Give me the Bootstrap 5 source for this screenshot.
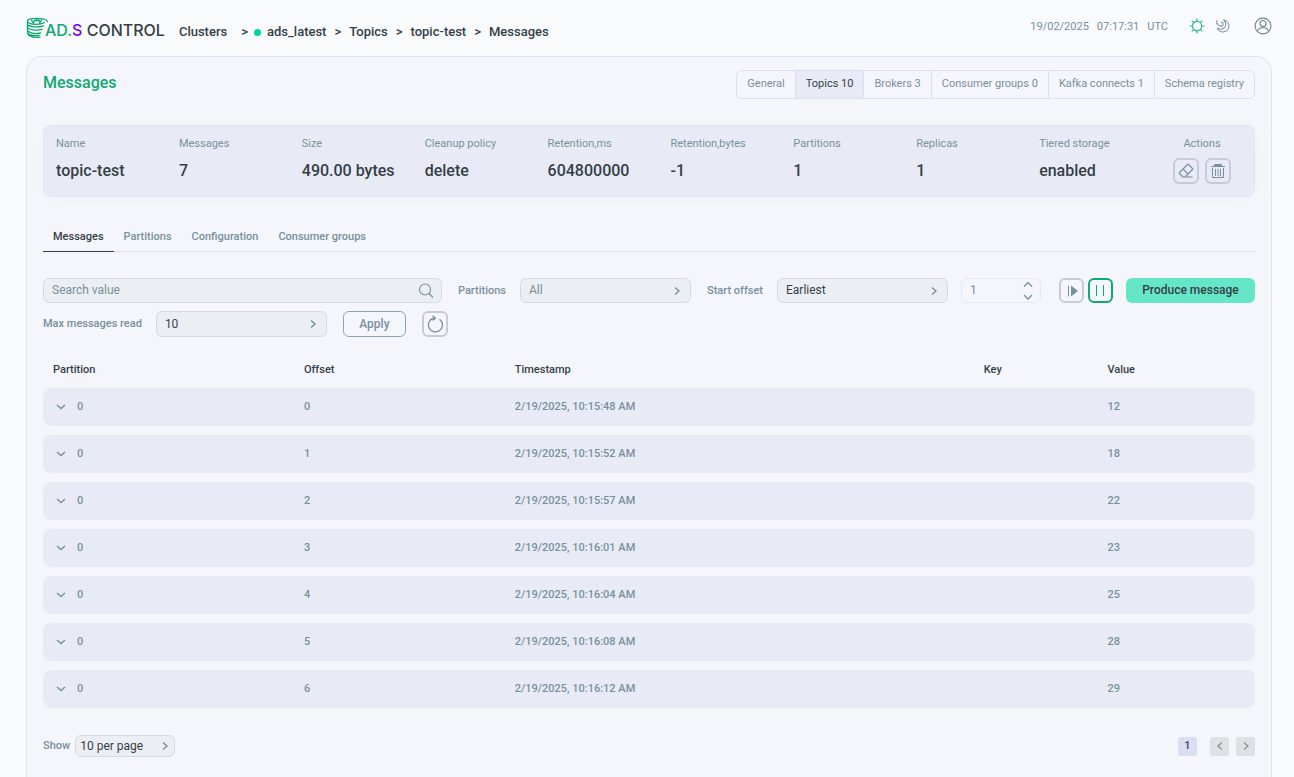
<!DOCTYPE html>
<html lang="en">
<head>
<meta charset="utf-8">
<meta name="viewport" content="width=device-width, initial-scale=1">
<title>Messages - ADS Control</title>
<link href="https://cdn.jsdelivr.net/npm/bootstrap@5.3.0/dist/css/bootstrap.min.css" rel="stylesheet">
<style>
:root{--ink:#353f47;--muted:#78909c;--line:#d9dff2;--panel:#e8ebf5;--green:#0fa972;--field:#ebeff4;--field-line:#d6dade}
body{font-family:Roboto,"Liberation Sans",sans-serif;font-size:11px;line-height:16px;color:var(--muted);background:#f8fafc}
svg{display:block;flex:none}
a{text-decoration:none;color:inherit}
.topbar{height:56px;padding:0 22px 0 26px}
.brand-text{font:500 16px/20px Inter,sans-serif;color:var(--ink);white-space:pre;margin-left:-4px}
.brand-text .ad{color:var(--green)}
.brand-text .s{color:#7a00e6}
.crumbs{font-size:13px;line-height:20px;font-weight:500;color:var(--ink);margin:8px 0 0 14px}
.crumbs .first{margin:0 6px 0 14px}
.live-dot{width:7px;height:7px;margin-right:6px;background:#00d3a0}
.clock{margin:0 21px 2px 0}
.ghost{border:0;background:none;padding:0}
.moon{margin:0 22px 0 11px;padding:0 8px 0 0}
.sheet{margin:0 22px 0 26px;padding:13px 16px 20px;background:#f4f6fb;border:1px solid #e0e3f5;border-bottom:0;border-radius:16px 16px 0 0}
.sheet h1{font-size:16px;line-height:26px;font-weight:500;color:var(--green);margin:0}
.section-tabs{border:1px solid var(--line);border-radius:6px;height:29px;overflow:hidden}
.section-tabs a{padding:5px 10px 6px;border-left:1px solid var(--line)}
.section-tabs li:first-child a{border-left:0}
.section-tabs a.active{background:var(--panel);color:var(--ink)}
.summary{margin-top:26px;height:72px;padding:10px 12px 8px;background:var(--panel);border:1px solid #e0e4f6;border-radius:8px;box-shadow:0 4px 18px #eff4fa}
.summary dl{flex:1 1 0;min-width:0;margin:0;white-space:nowrap}
.summary dt{font-weight:400}
.summary dd{margin:9px 0 0;font-size:16px;line-height:20px;font-weight:500;color:var(--ink)}
.summary .acts{width:80px}
.acts-row{gap:6px;margin-top:6px}
.sq{width:26px;height:26px;padding:0;border:2px solid #c8cad6;border-radius:6px;background:transparent;color:var(--muted);display:flex;align-items:center;justify-content:center}
.sq.play{width:25px;height:25px}
.sq.on{border-color:var(--green);color:var(--green)}
.view-tabs{margin-top:26px;border-bottom:1px solid var(--line);font-weight:500}
.view-tabs a{display:block;padding:6px 10px;margin-bottom:-1px;border-bottom:1px solid transparent}
.view-tabs a.active{color:var(--ink);border-color:var(--ink)}
.filters{margin-top:26px}
.filters label{font-weight:500;white-space:nowrap;margin-right:14px}
.fld{height:25px;padding:0 8px 2px;font-size:12px;line-height:16px;color:var(--muted);background-color:var(--field);border:1px solid var(--field-line);border-radius:6px}
.fld::placeholder{color:var(--muted);opacity:1}
.pick{width:171px;appearance:none;background-repeat:no-repeat;background-position:right 9px center;background-image:url("data:image/svg+xml,%3Csvg xmlns='http://www.w3.org/2000/svg' width='8' height='10' fill='none' stroke='%2378909c' stroke-width='1.4'%3E%3Cpath d='M2 1.5 6 5 2 8.5'/%3E%3C/svg%3E")}
.pick.dark{color:var(--ink)}
.pick.tall{height:26px;padding-bottom:0}
.search-ico{position:absolute;right:8px;top:5px}
.num-box{margin:0 18px 0 13px}
.num{width:80px;background:transparent;border-color:#e3e9f1;appearance:textfield;-moz-appearance:textfield}
.num::-webkit-inner-spin-button{appearance:none;-webkit-appearance:none}
.steps{position:absolute;right:8px;top:4px}
.btn-apply{width:63px;height:26px;border:1px solid #90a4ae;border-radius:6px;background:transparent;color:var(--muted);font-size:12px;font-weight:500;padding:0}
.btn-produce{width:129px;height:25px;margin-left:13px;border:0;border-radius:6px;background:#65e6c6;color:var(--ink);font-size:12px;font-weight:500;padding:0 0 2px}
.log{width:100%;table-layout:fixed;border-collapse:separate;border-spacing:0 9px;margin-top:15px;font-weight:500}
.log th{height:18px;padding:0 10px;font-weight:500;color:var(--ink)}
.log td{height:38px;padding:0 10px;background:var(--panel)}
.log td:first-child{border-radius:8px 0 0 8px}
.log td:last-child{border-radius:0 8px 8px 0}
.log .ghost{margin:0 10px 0 2px;color:var(--muted)}
.foot{margin-top:18px}
.foot label{font-weight:500}
.pick.small-pick{width:100px;height:22px;margin-left:5px;padding:0 4px;background-position:right 5px center}
.pages{gap:7px}
.pg{width:19px;height:19px;border:0;border-radius:3px;padding:0;background:#dfe0e3;color:#8b9095;display:flex;align-items:center;justify-content:center;font-weight:500}
.pg.cur{background:#d9def3;color:#34406b;margin-right:6px}
</style>
</head>
<body>
<div class="d-flex flex-column min-vh-100">
<header class="topbar d-flex align-items-center">
  <a href="#" class="d-flex align-items-center" aria-label="ADS Control">
    <svg width="23" height="22" viewBox="0 0 23 22" fill="none" stroke="#0fa972" stroke-width="1.300" stroke-linecap="round">
      <path d="M21.500 4.500C20 .3 1.500.3 1.500 4v11.500c0 3.500 5 5.500 12.500 4.700M1.500 4c0 2 3.500 3.300 8.500 3.300 4 0 7-.8 8.500-1.800M1.500 7.500c2 2.500 9.500 3.300 16 1.300M1.500 10.800c3 2.600 10 2.900 14.500 1.600M1.500 13.800c3 2.900 8.500 3.200 13 2.200M3 17.200c3 1.600 6 1.800 10 1.300M5.500 3.200l2 2.900M15.500 3l-1.700 3M7.500 6l1-2.500h5L14 6M10.800 1.500v2"/>
    </svg>
    <span class="brand-text mt-1"><span class="ad">AD.</span><span class="s">S</span> CONTROL</span>
  </a>
  <nav class="crumbs d-flex align-items-center" aria-label="breadcrumb">
    <a href="#">Clusters</a><span class="first">&gt;</span><span class="live-dot rounded-circle"></span><a href="#">ads_latest</a><span class="mx-2">&gt;</span><a href="#">Topics</a><span class="mx-2">&gt;</span><a href="#">topic-test</a><span class="mx-2">&gt;</span><span>Messages</span>
  </nav>
  <div class="ms-auto d-flex align-items-center">
    <div class="clock d-flex"><span>19/02/2025</span><span class="mx-2">07:17:31</span><span>UTC</span></div>
    <button class="ghost mb-1" aria-label="Light theme"><svg width="16" height="16" viewBox="0 0 16 16" fill="none" stroke="#2fb98a" stroke-width="1.200"><circle cx="8" cy="8" r="4.600"/><path d="M8 .5v3M8 12.500v3M.5 8h3M12.500 8h3M2.700 2.700l2 2M11.300 11.300l2 2M2.700 13.300l2-2M11.300 4.700l2-2"/></svg></button>
    <button class="ghost moon mb-1 me-3" aria-label="Dark theme"><svg width="14" height="14" viewBox="0 0 16 16" fill="none" stroke="#78909c" stroke-width="1.200"><path d="M8.500 1.200A6.800 6.800 0 1 1 1.500 10C4 12.500 8.500 12 10 9.500 12 6.500 11.500 3 8.500 1.200zM1 1.500V6M1 4.500C2.500 9 7.500 9 8 6.500 8.500 4.500 7 3.300 5.500 4"/></svg></button>
    <button class="ghost mb-1" aria-label="Account"><svg width="18" height="18" viewBox="0 0 18 18" fill="none" stroke="#78828c" stroke-width="1.100"><circle cx="9" cy="9" r="7.900"/><circle cx="9" cy="6.500" r="3"/><path d="M3.500 14.500c.5-5 10.500-5 11 0"/></svg></button>
  </div>
</header>
<main class="sheet flex-grow-1">
  <div class="d-flex justify-content-between align-items-start">
    <h1>Messages</h1>
    <ul class="section-tabs list-unstyled d-flex mb-0">
      <li><a class="d-block" href="#">General</a></li><li><a class="d-block active" href="#">Topics 10</a></li><li><a class="d-block" href="#">Brokers 3</a></li><li><a class="d-block" href="#">Consumer groups 0</a></li><li><a class="d-block" href="#">Kafka connects 1</a></li><li><a class="d-block" href="#">Schema registry</a></li>
    </ul>
  </div>
  <section class="summary d-flex">
    <dl><dt>Name</dt><dd>topic-test</dd></dl>
    <dl><dt>Messages</dt><dd>7</dd></dl>
    <dl><dt>Size</dt><dd>490.00 bytes</dd></dl>
    <dl><dt>Cleanup policy</dt><dd>delete</dd></dl>
    <dl><dt>Retention,ms</dt><dd>604800000</dd></dl>
    <dl><dt>Retention,bytes</dt><dd>-1</dd></dl>
    <dl><dt>Partitions</dt><dd>1</dd></dl>
    <dl><dt>Replicas</dt><dd>1</dd></dl>
    <dl><dt>Tiered storage</dt><dd>enabled</dd></dl>
    <div class="acts text-center">
      <div>Actions</div>
      <div class="acts-row d-flex justify-content-center">
        <button class="sq" aria-label="Clear topic"><svg width="16" height="16" viewBox="0 0 16 16" fill="none" stroke="currentColor" stroke-width="1.200" stroke-linejoin="round"><path d="M5 14 1.500 10.500Q1 10 1.500 9.500L9.500 1.500Q10 1 10.500 1.500L14.500 5.500Q15 6 14.500 6.500L7 14zM5 6l5 5M5 14h9.500"/></svg></button>
        <button class="sq" aria-label="Delete topic"><svg width="16" height="16" viewBox="0 0 16 16" fill="none" stroke="currentColor"><path d="M1 3.500h14M4.500 3.500v-2h7v2M4.500 2.500h7M2.500 5v9.500h11V5M5.500 6v7M8 6v7M10.500 6v7"/></svg></button>
      </div>
    </div>
  </section>
  <ul class="view-tabs list-unstyled d-flex mb-0">
    <li><a class="active" href="#">Messages</a></li><li><a href="#">Partitions</a></li><li><a href="#">Configuration</a></li><li><a href="#">Consumer groups</a></li>
  </ul>
  <form class="filters" onsubmit="return false">
    <div class="d-flex align-items-center">
      <div class="position-relative flex-grow-1 me-3">
        <input class="fld w-100 d-block" type="text" placeholder="Search value" aria-label="Search value">
        <svg class="search-ico" width="16" height="16" viewBox="0 0 16 16" fill="none" stroke="#78909c" stroke-width="1.100"><circle cx="7" cy="6.500" r="5.500"/><path d="m11 10.500 4 4"/></svg>
      </div>
      <label for="parts">Partitions</label>
      <select id="parts" class="fld pick me-3"><option>All</option></select>
      <label for="start">Start offset</label>
      <select id="start" class="fld pick dark"><option>Earliest</option></select>
      <div class="num-box position-relative">
        <input class="fld num d-block" type="number" value="1" aria-label="Offset">
        <svg class="steps" width="10" height="18" viewBox="0 0 10 18" fill="none" stroke="#78909c" stroke-width="1.300"><path d="m1 4.500 4-4 4 4M1 13l4 4 4-4"/></svg>
      </div>
      <button type="button" class="sq play me-1" aria-label="Resume"><svg width="14" height="14" viewBox="0 0 14 14" fill="#78909c"><path d="M3 1.500h1v11H3zM6 1.500 13 7l-7 5.500z"/></svg></button>
      <button type="button" class="sq play on" aria-label="Pause"><svg width="15" height="15" viewBox="0 0 15 15" fill="currentColor"><path d="M3 2h1v11H3zM10 2h1v11h-1z"/></svg></button>
      <button type="button" class="btn-produce">Produce message</button>
    </div>
    <div class="d-flex align-items-center mt-2">
      <label for="maxr">Max messages read</label>
      <select id="maxr" class="fld pick dark tall me-3"><option>10</option></select>
      <button type="button" class="btn-apply me-3">Apply</button>
      <button type="button" class="sq" aria-label="Refresh"><svg width="18" height="18" viewBox="0 0 18 18" fill="none" stroke="currentColor" stroke-width="1.300"><path d="M13.500 4.200A7 7 0 1 1 8.500 3M6.500.8 9.300 3 6.800 5.500"/></svg></button>
    </div>
  </form>
  <table class="log">
    <colgroup><col style="width:20.7%"><col style="width:17.4%"><col style="width:38.7%"><col style="width:10.2%"><col></colgroup>
    <thead><tr><th>Partition</th><th>Offset</th><th>Timestamp</th><th>Key</th><th>Value</th></tr></thead>
    <tbody id="rows"></tbody>
  </table>
  <div class="foot d-flex align-items-center">
    <label for="per">Show</label>
    <select id="per" class="fld pick dark small-pick"><option>10 per page</option></select>
    <div class="pages ms-auto d-flex">
      <button class="pg cur">1</button>
      <button class="pg" aria-label="Previous"><svg width="6" height="8" fill="none" stroke="currentColor" stroke-width="1.300"><path d="M5 .5 1 4l4 3.500"/></svg></button>
      <button class="pg" aria-label="Next"><svg width="6" height="8" fill="none" stroke="currentColor" stroke-width="1.300"><path d="M1 .5 5 4 1 7.500"/></svg></button>
    </div>
  </div>
</main>
</div>
<script>
const messages=[["10:15:48",12],["10:15:52",18],["10:15:57",22],["10:16:01",23],["10:16:04",25],["10:16:08",28],["10:16:12",29]];
document.getElementById("rows").innerHTML=messages.map(([t,v],i)=>`<tr><td><div class="d-flex align-items-center"><button class="ghost" aria-label="Expand"><svg width="12" height="8" viewBox="0 0 12 8" fill="none" stroke="currentColor" stroke-width="1.400"><path d="m2 2 4 3.500L10 2"/></svg></button>0</div></td><td>${i}</td><td>2/19/2025, ${t} AM</td><td></td><td>${v}</td></tr>`).join("");
</script>
<script src="https://cdn.jsdelivr.net/npm/bootstrap@5.3.0/dist/js/bootstrap.bundle.min.js"></script>
</body>
</html>
